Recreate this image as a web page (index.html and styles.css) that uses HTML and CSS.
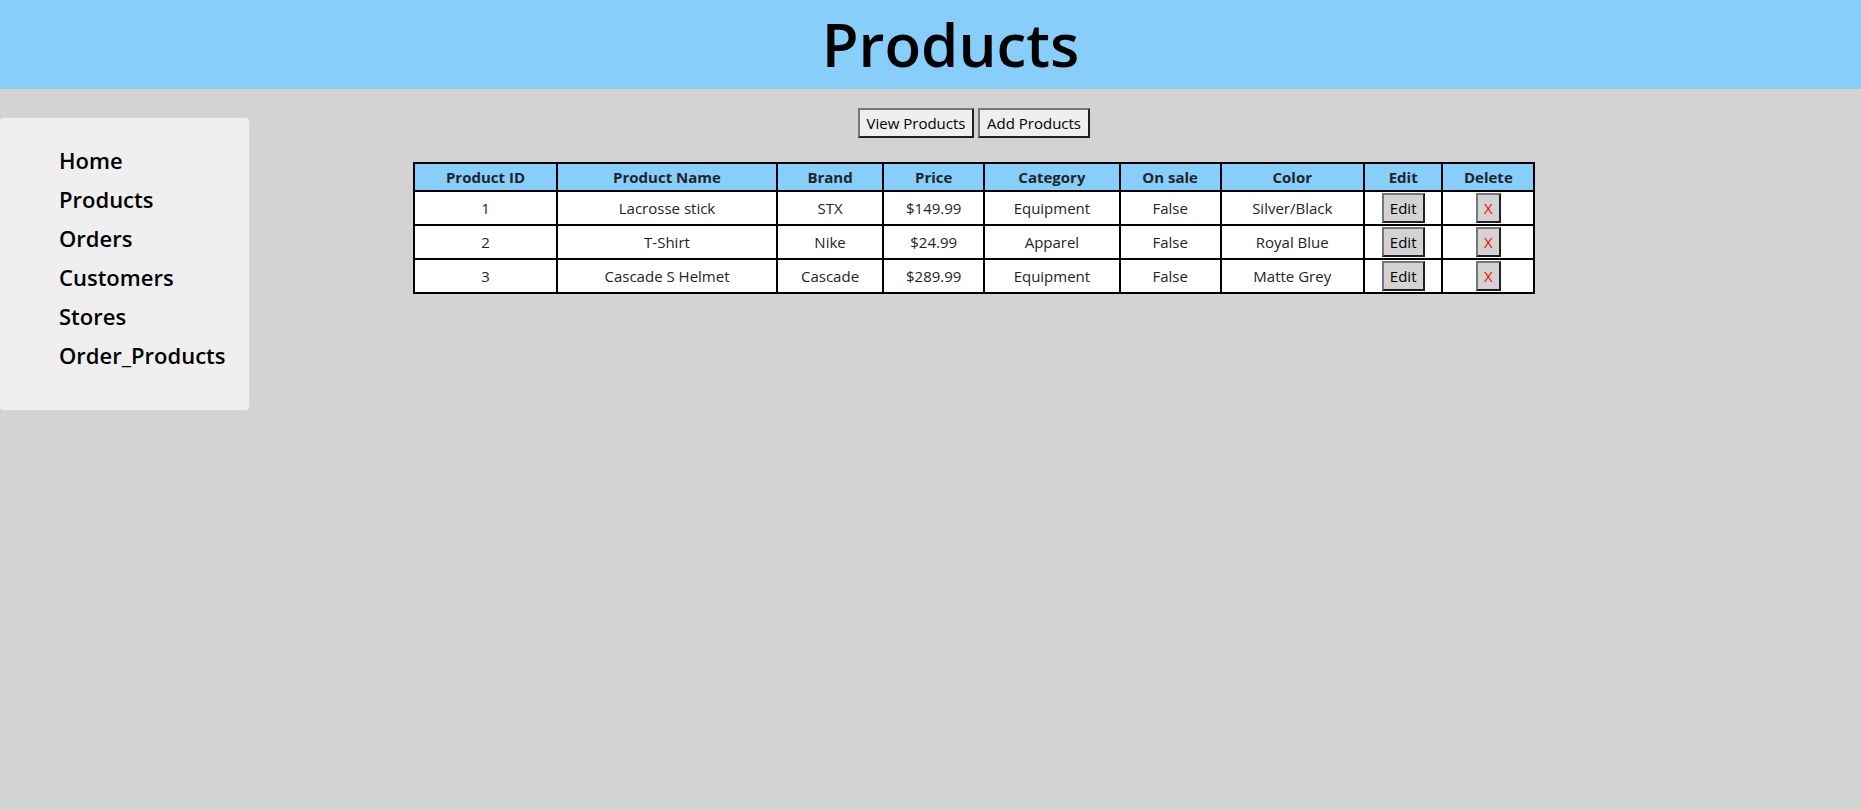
FILE: index.html
```html
<!DOCTYPE html>
<html lang="en">
<head>
<meta charset="utf-8">
<title>Products</title>
<link rel="stylesheet" href="styles.css">
</head>
<body>
<header class="page-header"><h1 class="page-title">Products</h1></header>
<div class="layout">
  <nav class="sidebar">
    <ul class="nav-list">
      <li><a class="nav-link" href="#home">Home</a></li>
      <li><a class="nav-link" href="#products">Products</a></li>
      <li><a class="nav-link" href="#orders">Orders</a></li>
      <li><a class="nav-link" href="#customers">Customers</a></li>
      <li><a class="nav-link" href="#stores">Stores</a></li>
      <li><a class="nav-link" href="#order-products">Order_Products</a></li>
    </ul>
  </nav>
  <main class="content">
    <div class="actions">
      <button class="btn btn-view" type="button">View Products</button>
      <button class="btn btn-add" type="button">Add Products</button>
    </div>
    <table class="products">
      <colgroup>
        <col class="col-id"><col class="col-name"><col class="col-brand"><col class="col-price"><col class="col-category"><col class="col-sale"><col class="col-color"><col class="col-edit"><col class="col-delete">
      </colgroup>
      <thead>
        <tr><th>Product ID</th><th>Product Name</th><th>Brand</th><th>Price</th><th>Category</th><th>On sale</th><th>Color</th><th>Edit</th><th>Delete</th></tr>
      </thead>
      <tbody>
        <tr><td>1</td><td>Lacrosse stick</td><td>STX</td><td>$149.99</td><td>Equipment</td><td>False</td><td>Silver/Black</td><td><button class="btn btn-edit" type="button">Edit</button></td><td><button class="btn btn-delete" type="button">X</button></td></tr>
        <tr><td>2</td><td>T-Shirt</td><td>Nike</td><td>$24.99</td><td>Apparel</td><td>False</td><td>Royal Blue</td><td><button class="btn btn-edit" type="button">Edit</button></td><td><button class="btn btn-delete" type="button">X</button></td></tr>
        <tr><td>3</td><td>Cascade S Helmet</td><td>Cascade</td><td>$289.99</td><td>Equipment</td><td>False</td><td>Matte Grey</td><td><button class="btn btn-edit" type="button">Edit</button></td><td><button class="btn btn-delete" type="button">X</button></td></tr>
      </tbody>
    </table>
  </main>
</div>
</body>
</html>
```
FILE: styles.css
```css
* { box-sizing: border-box; }

body {
  margin: 0;
  background: #d3d3d3;
  color: #212529;
  font: 15px/24px "Segoe UI", "Open Sans", "Noto Sans", sans-serif;
}

.page-header {
  padding: 8px 0 9px 40px;
  background: #87cefa;
  text-align: center;
}

.page-title {
  margin: 0;
  color: #000;
  font-size: 60px;
  font-weight: 600;
  line-height: 72px;
}

.layout {
  display: flex;
  align-items: flex-start;
}

.sidebar {
  flex: 0 0 249px;
  margin-top: 29px;
  padding: 24px 0 37px 59px;
  border-radius: 3px;
  background: #efefef;
}

.nav-list {
  display: grid;
  gap: 3px;
  margin: 0;
  padding: 0;
  list-style: none;
}

.nav-link {
  display: block;
  color: #000;
  font-size: 22px;
  font-weight: 600;
  line-height: 36px;
  text-decoration: none;
}

.content {
  flex: 1;
  margin-left: 8.8%;
  margin-right: 17.5%;
  padding-top: 19px;
}

.actions {
  display: flex;
  justify-content: center;
  gap: 4px;
  margin-bottom: 24px;
}

.btn {
  height: 30px;
  padding: 0;
  border: 2px solid;
  border-color: #767676 #212121 #212121 #767676;
  border-radius: 0;
  background: #efefef;
  color: #000;
  font: inherit;
  white-space: nowrap;
}

.btn-view { width: 116px; }
.btn-add { width: 112px; }

.products {
  width: 100%;
  table-layout: fixed;
  border-collapse: collapse;
  background: #fff;
  text-align: center;
}

.products th,
.products td {
  padding: 1px;
  border: 2px solid #000;
}

.products th { background: #87cefa; font-weight: 700; }
.products .btn { display: block; margin: 0 auto; background: #d3d3d3; }
.products .btn-edit { width: 43px; }
.products .btn-delete { width: 25px; color: #f00; }

.col-id, .col-color { width: 12.8%; }
.col-name { width: 19.6%; }
.col-brand { width: 9.5%; }
.col-price, .col-sale { width: 9%; }
.col-category { width: 12.1%; }
.col-edit { width: 7%; }
.col-delete { width: 8.2%; }
```
